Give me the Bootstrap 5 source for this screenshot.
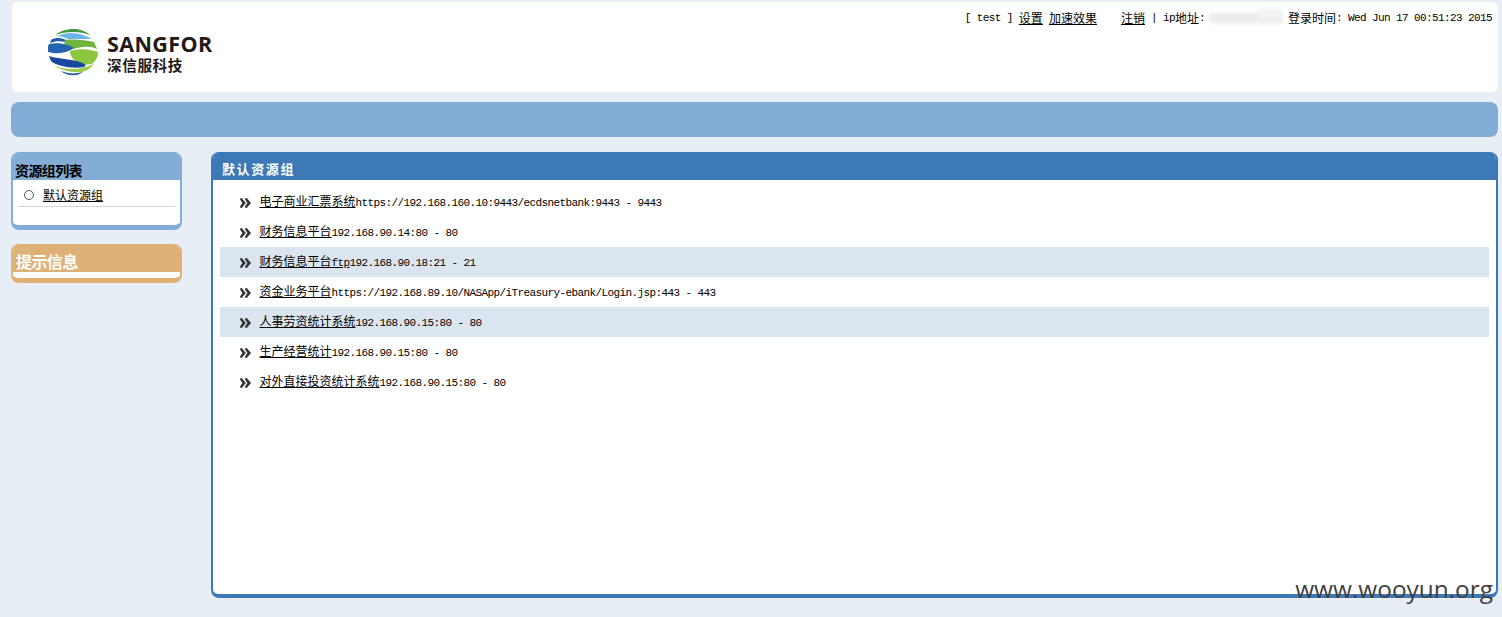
<!doctype html>
<html lang="zh"><head><meta charset="utf-8"><title>SANGFOR</title>
<link href="https://cdn.jsdelivr.net/npm/bootstrap@5.3.0/dist/css/bootstrap.min.css" rel="stylesheet">
<style>
html,body{height:617px;overflow:hidden}
body{background:#e7eef6;color:#000;font:11px/1 "Liberation Mono","Noto Sans CJK SC",monospace;letter-spacing:-.6px;padding:2px 4px 0 11px;position:relative}
a{color:#000}
.zh{font:12px/1 "Noto Sans CJK SC",sans-serif;letter-spacing:0}
.top-panel{height:90px;margin-left:1px;background:#fff;border-radius:6px;position:relative}
.brand{padding:26px 0 0 36px;gap:9px}
.brand-name{font:700 21.5px/22px "Open Sans","Liberation Sans",sans-serif;letter-spacing:.4px;color:#231815;margin-top:5px}
.brand-zh{font:700 14.6px/16px "Noto Sans CJK SC",sans-serif;letter-spacing:.6px;color:#231815;margin-top:2px}
.user-line{position:absolute;right:6px;top:10px;white-space:pre;height:12px;align-items:center}
.lnk-speed{margin-left:6px}
.smudge{display:inline-block;width:74px;height:10px;margin:0 5px 0 4px;background:#ebebeb;filter:blur(2px);position:relative}
.smudge::after{content:"";position:absolute;right:0;top:-5px;width:26px;height:10px;background:#f3f3f3;border-radius:5px}
.nav-strip{height:35px;margin-top:10px;background:#83acd7;border-radius:8px}
.work{margin-top:15px;gap:29px}
.side{width:171px;flex:none}
.side-box{border-radius:8px;overflow:hidden;background:#fff}
.box-blue{height:78px;border:solid #83acd7;border-width:0 2px 5px}
.box-blue .box-head{height:28px;background:#83acd7;margin:0 -2px;padding:11px 0 0 4px;font:700 14px/1 "Noto Sans CJK SC",sans-serif}
.res-item{margin:5px 5px 0;height:22px;border-bottom:1px solid #d5d5d5;padding:0 0 1px 6px;gap:9px}
.dot{width:10px;height:10px;border:1.5px solid #555;border-radius:50%}
.box-tan{height:39px;margin-top:14px;border:solid #deb276;border-width:0 2px 5px}
.box-tan .box-head{height:28px;background:#deb276;margin:0 -2px;padding:9px 0 0 5px;color:#fff;font:700 16px/1 "Noto Sans CJK SC",sans-serif}
.main-panel{width:1287px;height:446px;background:#fff;border:solid #3d79b7;border-width:0 2px 4px;border-radius:8px;overflow:hidden}
.main-head{height:28px;background:#3d79b7;margin:0 -2px;padding:10px 0 0 11px;color:#fff;font:700 13px/1 "Noto Sans CJK SC",sans-serif;letter-spacing:1.6px}
.res-list{padding:7px 7px 0}
.res-row{height:30px;padding-left:20px;gap:8.5px}
.res-row.alt{background:#dbe5ef}
.res-row svg{flex:none;margin-top:2px}
.mark-wm{position:absolute;right:9px;top:574px;font:24.4px/1.2 "Open Sans",sans-serif;letter-spacing:0;color:#404040}
</style></head><body>
<header class="top-panel">
  <div class="brand d-flex">
    <svg width="50" height="48" viewBox="0 0 50 48" aria-hidden="true">
      <path d="M7 7C16 0 32-2 42 7 32 3 18 3 7 7Z" fill="#3f9a3c"/>
      <path d="M9 8C20 3 32 4 44 11L20 11C16 9 12 8 9 8Z" fill="#6bb5e8"/>
      <path d="M3 12C8 9 14 10 18 12L18 14C11 13 7 13 2 15Z" fill="#1f5aa8"/>
      <path d="M17 12C26 11 38 12 46 14L49 21C42 17 30 19 22 22 16 20 16 14 17 12Z" fill="#6fb53d"/>
      <path d="M1 16C10 14 20 16 26 20 20 24 12 27 0 24Q-1 20 1 16Z" fill="#2565b0"/>
      <path d="M22 23C32 20 42 21 50 24 50 30 47 33 44 36 34 38 22 33 22 23Z" fill="#8cc63f"/>
      <path d="M1 28C12 32 28 30 38 37L36 39C24 41 8 38 3 33Z" fill="#17489b"/>
      <path d="M5 37C16 42 30 43 46 36 42 41 38 43 34 44 24 45 12 42 5 37Z" fill="#9acb4a"/>
      <path d="M13 43C20 46 28 46 35 44 30 48 20 49 13 43Z" fill="#1f57a8"/>
    </svg>
    <div><div class="brand-name">SANGFOR</div><div class="brand-zh">深信服科技</div></div>
  </div>
  <div class="user-line d-flex">[ test ] <a class="zh" href="#">设置</a> <a class="zh lnk-speed" href="#">加速效果</a>    <a class="zh ms-4" href="#">注销</a> | ip<span class="zh">地址</span>:<span class="smudge"></span><span class="zh">登录时间</span>: Wed Jun 17 00:51:23 2015</div>
</header>
<div class="nav-strip"></div>
<div class="work d-flex align-items-start">
  <aside class="side">
    <div class="side-box box-blue">
      <div class="box-head">资源组列表</div>
      <div class="res-item d-flex align-items-center"><span class="dot"></span><a class="zh" href="#">默认资源组</a></div>
    </div>
    <div class="side-box box-tan"><div class="box-head">提示信息</div></div>
  </aside>
  <main class="main-panel">
    <div class="main-head">默认资源组</div>
    <div class="res-list">
      <div class="res-row d-flex align-items-center"><svg width="11" height="10" viewBox="0 0 11 10"><path d="M0 1 1.5 0 5.5 5 1.5 10 0 9 2.6 5ZM5 1 6.5 0 10.8 5 6.5 10 5 9 7.6 5Z" fill="#333" stroke="#333" stroke-width=".5"/></svg><span><a class="zh" href="#">电子商业汇票系统</a>https://192.168.160.10:9443/ecdsnetbank:9443 - 9443</span></div>
      <div class="res-row d-flex align-items-center"><svg width="11" height="10" viewBox="0 0 11 10"><path d="M0 1 1.5 0 5.5 5 1.5 10 0 9 2.6 5ZM5 1 6.5 0 10.8 5 6.5 10 5 9 7.6 5Z" fill="#333" stroke="#333" stroke-width=".5"/></svg><span><a class="zh" href="#">财务信息平台</a>192.168.90.14:80 - 80</span></div>
      <div class="res-row alt d-flex align-items-center"><svg width="11" height="10" viewBox="0 0 11 10"><path d="M0 1 1.5 0 5.5 5 1.5 10 0 9 2.6 5ZM5 1 6.5 0 10.8 5 6.5 10 5 9 7.6 5Z" fill="#333" stroke="#333" stroke-width=".5"/></svg><span><a href="#"><span class="zh">财务信息平台</span>ftp</a>192.168.90.18:21 - 21</span></div>
      <div class="res-row d-flex align-items-center"><svg width="11" height="10" viewBox="0 0 11 10"><path d="M0 1 1.5 0 5.5 5 1.5 10 0 9 2.6 5ZM5 1 6.5 0 10.8 5 6.5 10 5 9 7.6 5Z" fill="#333" stroke="#333" stroke-width=".5"/></svg><span><a class="zh" href="#">资金业务平台</a>https://192.168.89.10/NASApp/iTreasury-ebank/Login.jsp:443 - 443</span></div>
      <div class="res-row alt d-flex align-items-center"><svg width="11" height="10" viewBox="0 0 11 10"><path d="M0 1 1.5 0 5.5 5 1.5 10 0 9 2.6 5ZM5 1 6.5 0 10.8 5 6.5 10 5 9 7.6 5Z" fill="#333" stroke="#333" stroke-width=".5"/></svg><span><a class="zh" href="#">人事劳资统计系统</a>192.168.90.15:80 - 80</span></div>
      <div class="res-row d-flex align-items-center"><svg width="11" height="10" viewBox="0 0 11 10"><path d="M0 1 1.5 0 5.5 5 1.5 10 0 9 2.6 5ZM5 1 6.5 0 10.8 5 6.5 10 5 9 7.6 5Z" fill="#333" stroke="#333" stroke-width=".5"/></svg><span><a class="zh" href="#">生产经营统计</a>192.168.90.15:80 - 80</span></div>
      <div class="res-row d-flex align-items-center"><svg width="11" height="10" viewBox="0 0 11 10"><path d="M0 1 1.5 0 5.5 5 1.5 10 0 9 2.6 5ZM5 1 6.5 0 10.8 5 6.5 10 5 9 7.6 5Z" fill="#333" stroke="#333" stroke-width=".5"/></svg><span><a class="zh" href="#">对外直接投资统计系统</a>192.168.90.15:80 - 80</span></div>
    </div>
  </main>
</div>
<div class="mark-wm">www.wooyun.org</div>
</body></html>
